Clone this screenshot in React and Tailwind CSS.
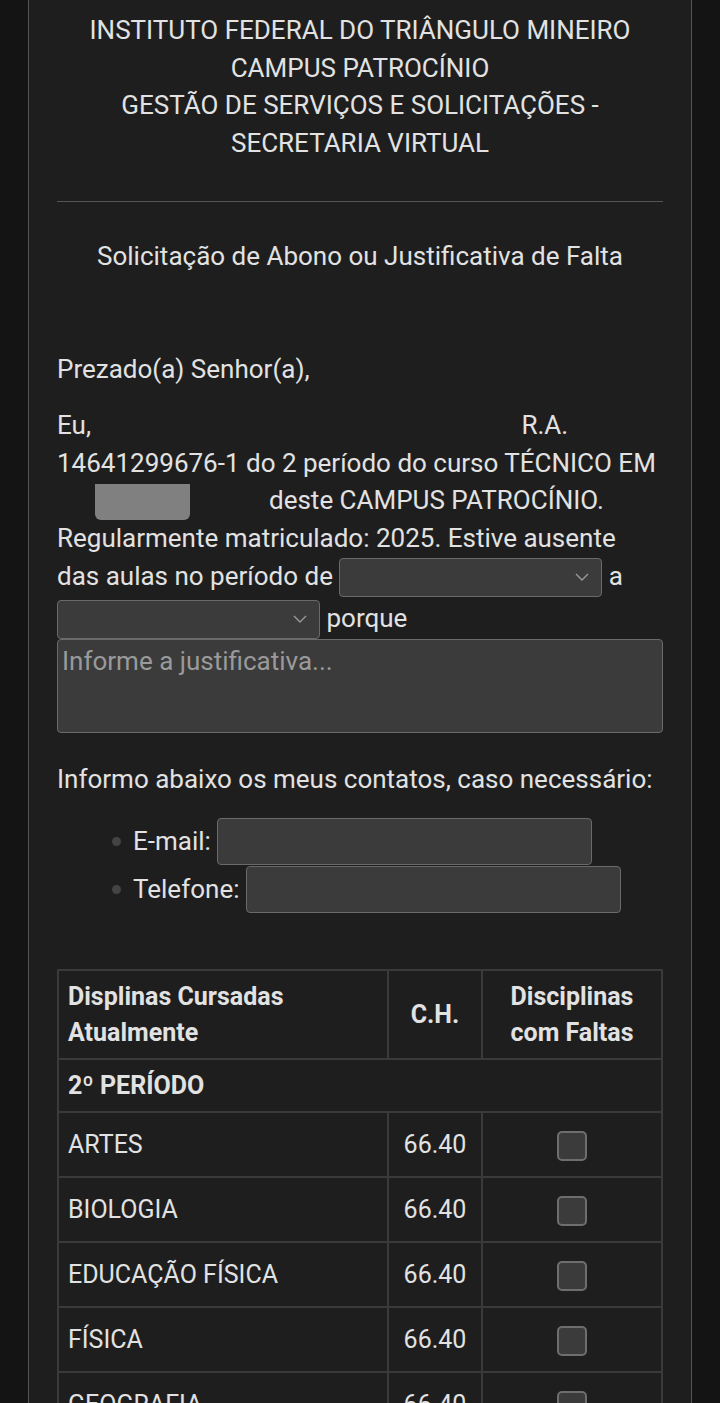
import React from "react";

const disciplinas = [
  { nome: "ARTES", ch: "66.40" },
  { nome: "BIOLOGIA", ch: "66.40" },
  { nome: "EDUCAÇÃO FÍSICA", ch: "66.40" },
  { nome: "FÍSICA", ch: "66.40" },
  { nome: "GEOGRAFIA", ch: "66.40" },
  { nome: "HISTÓRIA", ch: "66.40" },
];

function Select({ className }) {
  return (
    <span
      className={
        "inline-flex items-center justify-end align-middle h-[39px] bg-[#3b3b3b] border border-[#6a6a6a] rounded-[4px] pr-[12px] " +
        className
      }
    >
      <svg width="14" height="9" viewBox="0 0 14 9" fill="none">
        <path d="M1 1l6 6 6-6" stroke="#9a9a9a" strokeWidth="1.4" />
      </svg>
    </span>
  );
}

function Checkbox() {
  return (
    <span className="inline-block w-[30px] h-[30px] bg-[#3b3b3b] border-2 border-[#6e6e6e] rounded-[5px]" />
  );
}

export default function App() {
  return (
    <div className="min-h-[1403px] bg-[#141414] font-['Roboto',sans-serif] text-[#e2e2e2]">
      <div className="ml-[28px] w-[664px] min-h-[1403px] bg-[#1e1e1e] border-x border-[#555] px-[28px] pt-[12px]">
        <div className="text-center text-[26px] leading-[37.5px]">
          <div>INSTITUTO FEDERAL DO TRIÂNGULO MINEIRO</div>
          <div>CAMPUS PATROCÍNIO</div>
          <div>GESTÃO DE SERVIÇOS E SOLICITAÇÕES -</div>
          <div>SECRETARIA VIRTUAL</div>
        </div>

        <hr className="mt-[39px] border-0 border-t border-[#555]" />

        <div className="mt-[36px] text-center text-[26px] leading-[37.5px]">
          Solicitação de Abono ou Justificativa de Falta
        </div>

        <p className="mt-[75px] text-[26px] leading-[37.5px]">Prezado(a) Senhor(a),</p>

        <div className="mt-[19px] text-[26px] leading-[37.5px] whitespace-nowrap">
          Eu, <span className="inline-block w-[424px]" />R.A.
          <br />
          14641299676-1 do 2 período do curso TÉCNICO EM
          <br />
          <span className="inline-flex w-[212px] align-middle pl-[38px]">
            <span className="block w-[95px] h-[36px] bg-[#808080] rounded-b-[6px]" />
          </span>
          deste CAMPUS PATROCÍNIO.
          <br />
          Regularmente matriculado: 2025. Estive ausente
          <br />
          <span className="inline-flex items-center">
            das aulas no período de&nbsp;
            <Select className="w-[263px]" />
            &nbsp;a
          </span>
          <br />
          <span className="inline-flex items-center">
            <Select className="w-[263px]" />
            &nbsp;porque
          </span>
        </div>

        <div className="w-full h-[94px] bg-[#3b3b3b] border border-[#6a6a6a] rounded-[4px] px-[4px] text-[26px] leading-[42px] text-[#9a9a9a]">
          Informe a justificativa...
        </div>

        <p className="mt-[28px] text-[26px] leading-[37.5px] whitespace-nowrap">
          Informo abaixo os meus contatos, caso necessário:
        </p>

        <ul className="mt-[20px] pl-[55px] text-[26px]">
          <li className="flex items-center h-[47px]">
            <span className="w-[9px] h-[9px] rounded-full bg-[#444] mr-[12px]" />
            E-mail:&nbsp;
            <span className="w-[375px] h-[47px] bg-[#3b3b3b] border border-[#6a6a6a] rounded-[4px]" />
          </li>
          <li className="flex items-center h-[48px]">
            <span className="w-[9px] h-[9px] rounded-full bg-[#444] mr-[12px]" />
            Telefone:&nbsp;
            <span className="w-[375px] h-[47px] bg-[#3b3b3b] border border-[#6a6a6a] rounded-[4px]" />
          </li>
        </ul>

        <table className="mt-[56px] w-[606px] border-collapse text-[25px] leading-[36px]">
          <thead>
            <tr className="h-[89px] font-bold">
              <th className="w-[330px] border-2 border-[#3a3a3a] px-[9px] text-left align-middle">
                Displinas Cursadas
                <br />
                Atualmente
              </th>
              <th className="w-[94px] border-2 border-[#3a3a3a] text-center">C.H.</th>
              <th className="border-2 border-[#3a3a3a] text-center">
                Disciplinas
                <br />
                com Faltas
              </th>
            </tr>
          </thead>
          <tbody>
            <tr className="h-[53px]">
              <td colSpan={3} className="border-2 border-[#3a3a3a] px-[9px] font-bold">
                2º PERÍODO
              </td>
            </tr>
            {disciplinas.map((d) => (
              <tr key={d.nome} className="h-[65px]">
                <td className="border-2 border-[#3a3a3a] px-[9px]">{d.nome}</td>
                <td className="border-2 border-[#3a3a3a] text-center">{d.ch}</td>
                <td className="border-2 border-[#3a3a3a] text-center">
                  <span className="inline-flex align-middle">
                    <Checkbox />
                  </span>
                </td>
              </tr>
            ))}
          </tbody>
        </table>
      </div>
    </div>
  );
}
